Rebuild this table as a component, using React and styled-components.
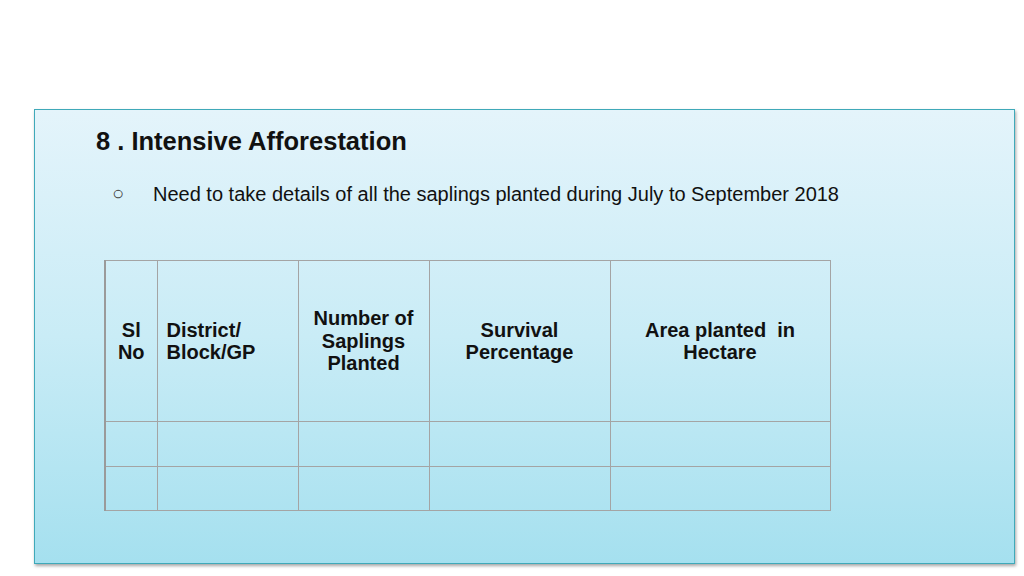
import React from "react";
import styled, { createGlobalStyle } from "styled-components";

const GlobalStyle = createGlobalStyle`
  html, body {
    margin: 0;
    padding: 0;
    background: #ffffff;
    font-family: "Liberation Sans", Arial, sans-serif;
  }
`;

const Page = styled.div`
  width: 1024px;
  height: 576px;
  padding: 109px 0 0 34px;
  box-sizing: border-box;
  overflow: hidden;
`;

const Slide = styled.section`
  width: 981px;
  height: 455px;
  box-sizing: border-box;
  border: 1px solid #3fa9b9;
  background: linear-gradient(180deg, #e4f4fb 0%, #c9ecf6 50%, #a5e0ef 100%);
  box-shadow: 1px 2px 3px rgba(0, 0, 0, 0.35);
  padding: 16px 0 0 61px;
  color: #111;
`;

const Title = styled.h1`
  margin: 0;
  font-size: 25.5px;
  line-height: 30px;
  font-weight: bold;
`;

const BulletRow = styled.div`
  display: flex;
  align-items: center;
  margin-top: 27px;
  font-size: 20px;
  line-height: 22px;
`;

const Bullet = styled.span`
  width: 57px;
  padding-left: 16px;
  box-sizing: border-box;
  font-size: 20px;
  color: #444;
  position: relative;
  top: -1px;
`;

const Table = styled.table`
  margin: 55px 0 0 8px;
  border-collapse: collapse;
  border-left: 2px solid #9a9a9a;
`;

const HeadCell = styled.th`
  width: ${(p) => p.w}px;
  height: 161px;
  border: 1px solid #a4a4a4;
  padding: 0 ${(p) => (p.left ? "9px" : "2px")};
  box-sizing: border-box;
  font-size: 20px;
  line-height: 22.5px;
  font-weight: bold;
  text-align: ${(p) => (p.left ? "left" : "center")};
  vertical-align: middle;
`;

const Cell = styled.td`
  height: ${(p) => p.h}px;
  border: 1px solid #a4a4a4;
  padding: 0;
`;

const columns = [
  { w: 52, label: ["Sl", "No"] },
  { w: 141, label: ["District/", "Block/GP"], left: true },
  { w: 131, label: ["Number of", "Saplings", "Planted"] },
  { w: 181, label: ["Survival", "Percentage"] },
  { w: 220, label: ["Area planted\u00a0 in", "Hectare"] },
];

export default function App() {
  return (
    <>
      <GlobalStyle />
      <Page>
        <Slide>
          <Title>8 . Intensive Afforestation</Title>
          <BulletRow>
            <Bullet>○</Bullet>
            <span>
              Need to take details of all the saplings planted during July to
              September 2018
            </span>
          </BulletRow>
          <Table>
            <thead>
              <tr>
                {columns.map((c, i) => (
                  <HeadCell key={i} w={c.w} left={c.left}>
                    {c.label.map((l, j) => (
                      <React.Fragment key={j}>
                        {j > 0 && <br />}
                        {l}
                      </React.Fragment>
                    ))}
                  </HeadCell>
                ))}
              </tr>
            </thead>
            <tbody>
              {[44, 43].map((h, r) => (
                <tr key={r}>
                  {columns.map((c, i) => (
                    <Cell key={i} h={h} />
                  ))}
                </tr>
              ))}
            </tbody>
          </Table>
        </Slide>
      </Page>
    </>
  );
}
